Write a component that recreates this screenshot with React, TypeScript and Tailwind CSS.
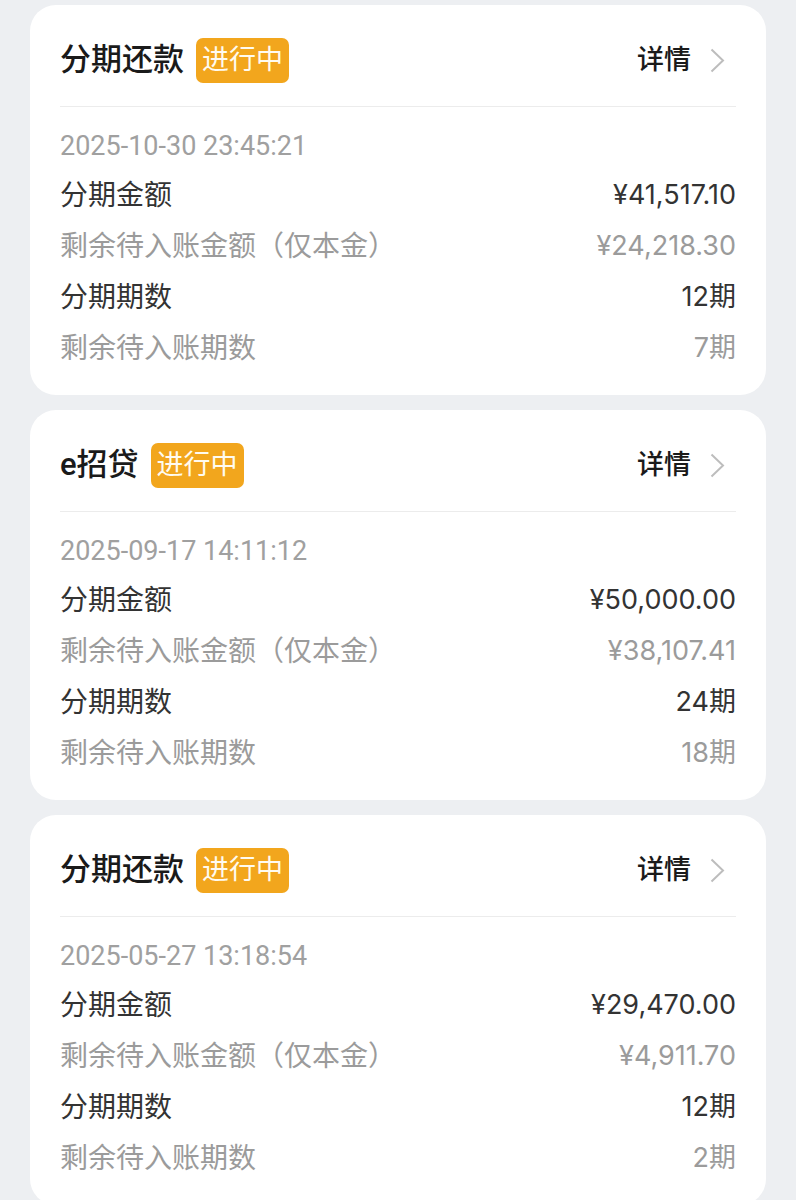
import React from "react";

interface Plan {
	title: string;
	date: string;
	amount: string;
	remainAmount: string;
	periods: string;
	remainPeriods: string;
}

const plans: Plan[] = [
	{
		title: "分期还款",
		date: "2025-10-30 23:45:21",
		amount: "¥41,517.10",
		remainAmount: "¥24,218.30",
		periods: "12期",
		remainPeriods: "7期",
	},
	{
		title: "e招贷",
		date: "2025-09-17 14:11:12",
		amount: "¥50,000.00",
		remainAmount: "¥38,107.41",
		periods: "24期",
		remainPeriods: "18期",
	},
	{
		title: "分期还款",
		date: "2025-05-27 13:18:54",
		amount: "¥29,470.00",
		remainAmount: "¥4,911.70",
		periods: "12期",
		remainPeriods: "2期",
	},
];

const Row = ({ label, value, muted }: { label: string; value: string; muted?: boolean }) => (
	<div
		className={`flex h-[51px] items-center justify-between text-[28px] ${
			muted ? "text-[#9b9b9b]" : "text-[#333333]"
		}`}>
		<span>{label}</span>
		<span className="font-['Inter','Noto_Sans_CJK_SC',sans-serif] text-[27px]">{value}</span>
	</div>
);

const PlanCard = ({ plan }: { plan: Plan }) => (
	<div className="h-[390px] rounded-[26px] bg-white px-[30px] pb-[23px]">
		{/* header */}
		<div className="mt-[27px] flex h-[56px] items-center justify-between pr-[11px]">
			<div className="flex items-center gap-[12px]">
				<span className="text-[31px] font-medium text-[#1a1a1a]">{plan.title}</span>
				<span className="flex h-[45px] items-center rounded-[7px] bg-[#f2a61d] px-[6px] text-[27px] text-[#fffbf0]">
					进行中
				</span>
			</div>
			<div className="flex items-center gap-[19px]">
				<span className="text-[27px] font-medium text-[#1a1a1a]">详情</span>
				<svg width="15" height="25" viewBox="0 0 15 25" fill="none">
					<polyline points="1.5,1.5 13,12.5 1.5,23.5" stroke="#bdbdbd" strokeWidth="2" />
				</svg>
			</div>
		</div>
		<div className="mt-[18px] h-px bg-[#ececec]" />
		<div className="mt-[15px] flex h-[48px] items-center text-[27px] text-[#a0a0a0]">{plan.date}</div>
		<Row label="分期金额" value={plan.amount} />
		<Row label="剩余待入账金额（仅本金）" value={plan.remainAmount} muted />
		<Row label="分期期数" value={plan.periods} />
		<Row label="剩余待入账期数" value={plan.remainPeriods} muted />
	</div>
);

export default function App() {
	return (
		<div
			className="min-h-[1200px] bg-[#edeff2] px-[30px] pt-[5px]"
			style={{ fontFamily: 'Roboto, "Noto Sans CJK SC", sans-serif' }}>
			<div className="flex flex-col gap-[15px]">
				{plans.map((plan, i) => (
					<PlanCard key={i} plan={plan} />
				))}
			</div>
		</div>
	);
}
